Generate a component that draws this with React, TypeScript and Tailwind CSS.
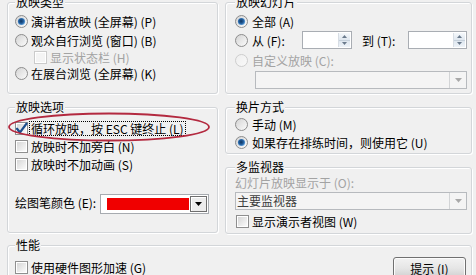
import React from "react";

const FONT = '"Noto Sans CJK SC", "Noto Sans", sans-serif';

function Radio({ checked = false, disabled = false }: { checked?: boolean; disabled?: boolean }) {
  return (
    <svg width="13" height="13" viewBox="0 0 13 13" className="shrink-0">
      <defs>
        <linearGradient id="rfill" x1="0" y1="0" x2="1" y2="1">
          <stop offset="0" stopColor="#d2d2d2" />
          <stop offset="1" stopColor="#fdfdfd" />
        </linearGradient>
        <linearGradient id="rfilld" x1="0" y1="0" x2="1" y2="1">
          <stop offset="0" stopColor="#eeeeee" />
          <stop offset="1" stopColor="#fafafa" />
        </linearGradient>
        <radialGradient id="rdot" cx="0.45" cy="0.45" r="0.6">
          <stop offset="0" stopColor="#0f3560" />
          <stop offset="0.55" stopColor="#235f9e" />
          <stop offset="1" stopColor="#6fb0ea" />
        </radialGradient>
      </defs>
      <circle
        cx="6.5"
        cy="6.5"
        r="6"
        fill={disabled ? "url(#rfilld)" : "url(#rfill)"}
        stroke={disabled ? "#cdcdcd" : "#8d8d8d"}
        strokeWidth="1"
      />
      {checked && <circle cx="6.5" cy="6.5" r="3.6" fill="url(#rdot)" />}
    </svg>
  );
}

function Check({ checked = false, disabled = false }: { checked?: boolean; disabled?: boolean }) {
  return (
    <svg width="13" height="13" viewBox="0 0 13 13" className="shrink-0 overflow-visible">
      <defs>
        <linearGradient id="cfill" x1="0" y1="0" x2="1" y2="1">
          <stop offset="0" stopColor="#d6d6d6" />
          <stop offset="1" stopColor="#fbfbfb" />
        </linearGradient>
      </defs>
      <rect
        x="0.5"
        y="0.5"
        width="12"
        height="12"
        fill="#fff"
        stroke={disabled ? "#cbcbcb" : "#8f8f8f"}
      />
      <rect x="2" y="2" width="9" height="9" fill={disabled ? "#f4f4f4" : "url(#cfill)"} />
      {checked && (
        <path
          d="M2 6.8 L5 10.4 L11.5 1.6"
          fill="none"
          stroke="#1c4f8e"
          strokeWidth="2.3"
          strokeLinecap="round"
          strokeLinejoin="round"
        />
      )}
    </svg>
  );
}

function Group({
  title,
  className,
  children,
  titleLeft = "left-[7px]",
}: {
  title: string;
  className: string;
  children?: React.ReactNode;
  titleLeft?: string;
}) {
  return (
    <div
      className={
        "relative border border-[#d3d6d9] rounded-[3px] shadow-[inset_1px_1px_0_#ffffff,1px_1px_0_#ffffff] " +
        className
      }
    >
      <span className={"absolute top-[-8px] bg-[#f0f0f0] px-[1px] leading-[14px] text-black " + titleLeft}>
        {title}
      </span>
      {children}
    </div>
  );
}

function Spin({ w }: { w: string }) {
  return (
    <div className={"h-[18px] bg-white border border-[#a9adb3] flex justify-end items-stretch p-[1px] " + w}>
      <div className="w-[12px] flex flex-col border-l border-[#d7dde4]">
        <div className="flex-1 bg-gradient-to-b from-[#f5f8fb] to-[#dfe7ef] flex items-center justify-center">
          <svg width="5" height="3" viewBox="0 0 5 3">
            <path d="M0 3 L2.5 0 L5 3 Z" fill="#6a7a8c" />
          </svg>
        </div>
        <div className="flex-1 bg-gradient-to-b from-[#dfe7ef] to-[#eef3f8] flex items-center justify-center border-t border-[#c5d0db]">
          <svg width="5" height="3" viewBox="0 0 5 3">
            <path d="M0 0 L2.5 3 L5 0 Z" fill="#6a7a8c" />
          </svg>
        </div>
      </div>
    </div>
  );
}

function Combo({ w, text }: { w: string; text?: string }) {
  return (
    <div className={"h-[18px] bg-[#f4f4f4] border border-[#b7babe] flex items-center " + w}>
      <span className="flex-1 pl-[1px] text-[#3d3d3d] leading-[16px]">{text}</span>
      <div className="w-[17px] h-full border-l border-[#d2d4d6] flex items-center justify-center">
        <svg width="7" height="4" viewBox="0 0 7 4">
          <path d="M0 0 L3.5 4 L7 0 Z" fill="#a8a8a8" />
        </svg>
      </div>
    </div>
  );
}

const dis = "text-[#a3a3a3]";

export default function App() {
  return (
    <div
      className="relative w-[476px] h-[275px] overflow-hidden bg-[#f0f0f0] text-[12px] leading-[17px] text-black"
      style={{ fontFamily: FONT }}
    >
      <div className="flex flex-col pt-[2px] pl-[7px]">
        {/* Row 1 */}
        <div className="flex">
          <Group title="放映类型" className="w-[211px] h-[92px] pl-[7px] pt-[10px]">
            <div className="flex items-center gap-[3px] h-[17px]">
              <Radio checked />
              <span>演讲者放映 (全屏幕) (P)</span>
            </div>
            <div className="flex items-center gap-[3px] h-[17px] mt-[2px]">
              <Radio />
              <span>观众自行浏览 (窗口) (B)</span>
            </div>
            <div className="flex items-center gap-[3px] h-[16px] ml-[19px]">
              <Check disabled />
              <span className={dis}>显示状态栏 (H)</span>
            </div>
            <div className="flex items-center gap-[3px] h-[17px]">
              <Radio />
              <span>在展台浏览 (全屏幕) (K)</span>
            </div>
          </Group>

          <Group title="放映幻灯片" className="ml-[7px] w-[247px] h-[92px] pl-[9px] pt-[10px]" titleLeft="left-[9px]">
            <div className="flex items-center gap-[4px] h-[17px]">
              <Radio checked />
              <span>全部 (A)</span>
            </div>
            <div className="flex items-center h-[18px] mt-[1px]">
              <Radio />
              <span className="ml-[4px] w-[50px]">从 (F):</span>
              <Spin w="w-[50px]" />
              <span className="ml-[10px] w-[46px]">到 (T):</span>
              <Spin w="w-[59px]" />
            </div>
            <div className="flex items-center gap-[4px] h-[17px] mt-[3px]">
              <Radio disabled />
              <span className={dis}>自定义放映 (C):</span>
            </div>
            <div className="mt-[2px] ml-[20px]">
              <Combo w="w-[212px]" />
            </div>
          </Group>
        </div>

        {/* Row 2 */}
        <div className="flex mt-[13px]">
          <Group title="放映选项" className="w-[211px] h-[126px] self-start pl-[7px] pt-[11px]">
            <div className="flex items-center h-[18px]">
              <Check checked />
              <span className="ml-[1px] px-[1px] h-[15px] leading-[14px] border border-dotted border-black">
                循环放映，按 ESC 键终止 (L)
              </span>
            </div>
            <div className="flex items-center gap-[3px] h-[18px]">
              <Check />
              <span>放映时不加旁白 (N)</span>
            </div>
            <div className="flex items-center gap-[3px] h-[18px]">
              <Check />
              <span>放映时不加动画 (S)</span>
            </div>
            <div className="flex items-start mt-[21px]">
              <span className="w-[85px]">绘图笔颜色 (E):</span>
              <div className="w-[109px] h-[20px] bg-white border border-[#a7abb0] flex items-center pl-[6px] pr-[1px]">
                <div className="w-[82px] h-[12px] bg-[#f00000]" />
                <div className="ml-auto w-[17px] h-[16px] bg-[#ececec] border border-[#6f6f6f] shadow-[inset_1px_1px_0_#ffffff] flex items-center justify-center">
                  <svg width="7" height="4" viewBox="0 0 7 4">
                    <path d="M0 0 L3.5 4 L7 0 Z" fill="#000" />
                  </svg>
                </div>
              </div>
            </div>
          </Group>

          <div className="ml-[7px] flex flex-col">
            <Group title="换片方式" className="w-[247px] h-[47px] pl-[9px] pt-[7px]" titleLeft="left-[9px]">
              <div className="flex items-center gap-[4px] h-[18px]">
                <Radio />
                <span>手动 (M)</span>
              </div>
              <div className="flex items-center gap-[4px] h-[18px]">
                <Radio checked />
                <span>如果存在排练时间，则使用它 (U)</span>
              </div>
            </Group>
            <Group title="多监视器" className="mt-[13px] w-[247px] h-[67px] pl-[9px] pt-[7px]" titleLeft="left-[9px]">
              <div className={"h-[16px] leading-[16px] " + dis}>幻灯片放映显示于 (O):</div>
              <div className="mt-[1px]">
                <Combo w="w-[232px]" text="主要监视器" />
              </div>
              <div className="flex items-center gap-[3px] h-[17px] mt-[3px] ml-[1px]">
                <Check />
                <span>显示演示者视图 (W)</span>
              </div>
            </Group>
          </div>
        </div>

        {/* Row 3 */}
        <Group title="性能" className="mt-[11px] w-[465px] h-[60px] pl-[7px] pr-[5px]">
          <div className="flex items-start justify-between">
            <div className="flex items-center gap-[3px] h-[17px] mt-[13px]">
              <Check />
              <span>使用硬件图形加速 (G)</span>
            </div>
            <div className="mt-[11px] w-[73px] h-[22px] rounded-[3px] border border-[#707070] bg-gradient-to-b from-[#f2f2f2] via-[#e6e6e6] to-[#cfcfcf] shadow-[inset_0_0_0_1px_#fcfcfc] flex items-center justify-center">
              <span className="leading-[17px]">提示 (I)</span>
            </div>
          </div>
        </Group>
      </div>

      {/* red hand-drawn ellipse annotation */}
      <svg
        className="absolute left-0 top-0 pointer-events-none"
        width="476"
        height="275"
        viewBox="0 0 476 275"
      >
        <ellipse cx="109" cy="127" rx="100" ry="13.5" fill="none" stroke="#b3293f" strokeWidth="1.8" />
      </svg>
    </div>
  );
}
